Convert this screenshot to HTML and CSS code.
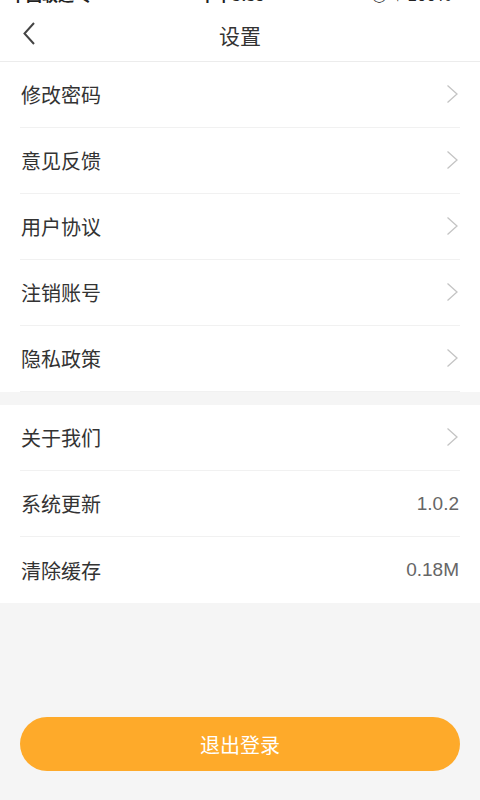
FILE: index.html
```html
<!DOCTYPE html>
<html lang="zh">
<head>
<meta charset="utf-8">
<title>设置</title>
<link rel="stylesheet" href="styles.css">
</head>
<body>
<div class="page">
  <div class="status">
    <div class="status-inner">
      <span>中国联通 令</span>
      <span>下午3:35</span>
      <span>◎ ✦ 100% ▭</span>
    </div>
  </div>
  <header class="nav">
    <span class="back">
      <svg width="12" height="23" viewBox="0 0 12 23"><path d="M11 1 L1.5 11.5 L11 22" fill="none" stroke="#444" stroke-width="2"/></svg>
    </span>
    <h1 class="title">设置</h1>
  </header>

  <section class="group">
    <div class="row"><span class="label">修改密码</span><span class="arrow"><svg width="13" height="20" viewBox="0 0 13 20"><path d="M1.5 1.5 L11 10 L1.5 18.5" fill="none" stroke="#c4c4c4" stroke-width="1.3"/></svg></span></div>
    <div class="row"><span class="label">意见反馈</span><span class="arrow"><svg width="13" height="20" viewBox="0 0 13 20"><path d="M1.5 1.5 L11 10 L1.5 18.5" fill="none" stroke="#c4c4c4" stroke-width="1.3"/></svg></span></div>
    <div class="row"><span class="label">用户协议</span><span class="arrow"><svg width="13" height="20" viewBox="0 0 13 20"><path d="M1.5 1.5 L11 10 L1.5 18.5" fill="none" stroke="#c4c4c4" stroke-width="1.3"/></svg></span></div>
    <div class="row"><span class="label">注销账号</span><span class="arrow"><svg width="13" height="20" viewBox="0 0 13 20"><path d="M1.5 1.5 L11 10 L1.5 18.5" fill="none" stroke="#c4c4c4" stroke-width="1.3"/></svg></span></div>
    <div class="row"><span class="label">隐私政策</span><span class="arrow"><svg width="13" height="20" viewBox="0 0 13 20"><path d="M1.5 1.5 L11 10 L1.5 18.5" fill="none" stroke="#c4c4c4" stroke-width="1.3"/></svg></span></div>
  </section>

  <section class="group">
    <div class="row"><span class="label">关于我们</span><span class="arrow"><svg width="13" height="20" viewBox="0 0 13 20"><path d="M1.5 1.5 L11 10 L1.5 18.5" fill="none" stroke="#c4c4c4" stroke-width="1.3"/></svg></span></div>
    <div class="row"><span class="label">系统更新</span><span class="value">1.0.2</span></div>
    <div class="row last"><span class="label">清除缓存</span><span class="value">0.18M</span></div>
  </section>

  <div class="spacer"></div>
  <div class="footer">
    <button class="logout">退出登录</button>
  </div>
</div>
</body>
</html>
```

FILE: styles.css
```css
* { box-sizing: border-box; }
html, body { margin: 0; padding: 0; }
body {
  background: #f5f5f5;
  font-family: "Noto Sans CJK SC", "Noto Sans", sans-serif;
  color: #333;
}
.page {
  width: 480px;
  height: 800px;
  display: flex;
  flex-direction: column;
}
.status {
  height: 5px;
  overflow: hidden;
  background: #fff;
}
.status-inner {
  display: flex;
  justify-content: space-between;
  font-size: 16px;
  line-height: 20px;
  margin-top: -16px;
  padding: 0 10px;
  color: #222;
  font-weight: 700;
}
.nav {
  height: 57px;
  background: #fff;
  border-bottom: 1px solid #ececec;
  display: flex;
  align-items: center;
  justify-content: center;
  position: relative;
}
.back {
  position: absolute;
  left: 23px;
  top: 17px;
  display: flex;
}
.title {
  margin: 4px 0 0;
  font-size: 21px;
  font-weight: 400;
  color: #333;
}
.group {
  background: #fff;
  padding: 0 20px;
  margin-bottom: 13px;
}
.row {
  height: 66px;
  display: flex;
  align-items: center;
  justify-content: space-between;
  border-bottom: 1px solid #f1f1f1;
}
.row.last { border-bottom: none; }
.label {
  font-size: 20px;
  color: #333;
  padding-left: 1px;
}
.arrow {
  display: flex;
  margin-right: 1px;
  margin-top: -2px;
}
.value {
  font-family: "Liberation Sans", "Open Sans", sans-serif;
  font-size: 19px;
  color: #666;
  margin-right: 1px;
}
.spacer { flex: 1; }
.footer {
  padding: 0 20px 29px;
}
.logout {
  width: 100%;
  height: 54px;
  border: none;
  border-radius: 27px;
  background: #feaa2a;
  color: #fff;
  font-family: "Noto Sans CJK SC", "Noto Sans", sans-serif;
  font-size: 20px;
  display: block;
}
```
